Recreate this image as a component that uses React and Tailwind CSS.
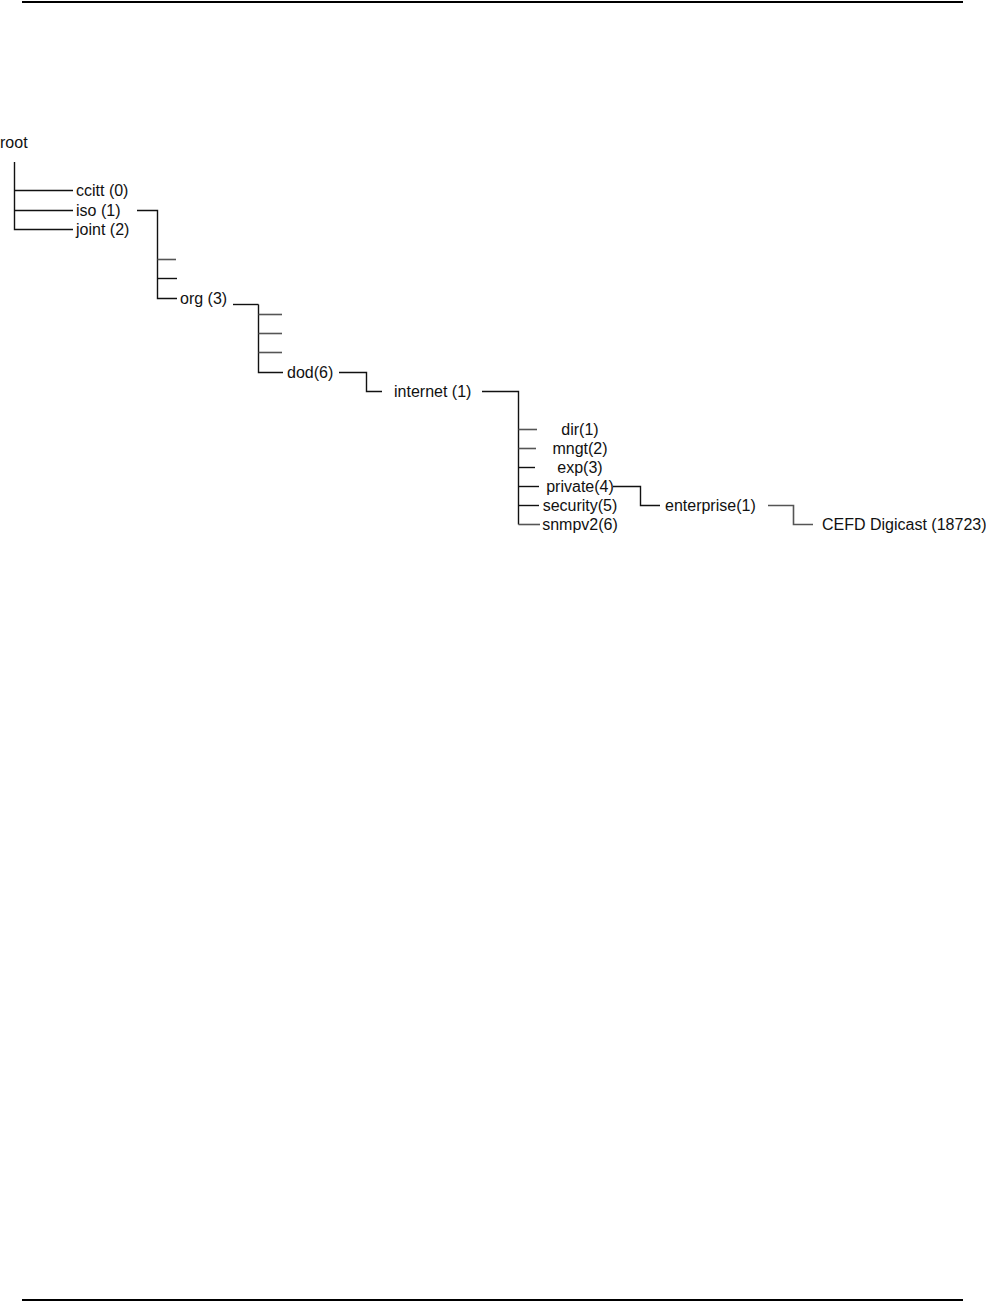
const labels = [
  { t: 'root', x: 0, y: 142 },
  { t: 'ccitt (0)', x: 76, y: 190 },
  { t: 'iso (1)', x: 76, y: 210 },
  { t: 'joint (2)', x: 76, y: 229 },
  { t: 'org (3)', x: 180, y: 298 },
  { t: 'dod(6)', x: 287, y: 372 },
  { t: 'internet (1)', x: 394, y: 391 },
  { t: 'dir(1)', x: 580, y: 429, center: true },
  { t: 'mngt(2)', x: 580, y: 448, center: true },
  { t: 'exp(3)', x: 580, y: 467, center: true },
  { t: 'private(4)', x: 580, y: 486, center: true },
  { t: 'security(5)', x: 580, y: 505, center: true },
  { t: 'snmpv2(6)', x: 580, y: 524, center: true },
  { t: 'enterprise(1)', x: 665, y: 505 },
  { t: 'CEFD Digicast (18723)', x: 822, y: 524 },
];

// connector paths, black and grey like the scanned original
const dark = [
  'M14.5 162V229.5H73',
  'M14.5 190.5H73',
  'M14.5 210.5H73',
  'M137 210.5H157.5V298.5H177',
  'M157.5 278.5H177',
  'M233 304.5H258.5',
  'M258.5 304.5V372.5H283',
  'M339 372.5H366.5V391.5H382',
  'M482 391.5H518.5V524.5',
  'M518.5 467.5H535',
  'M518.5 486.5H539',
  'M518.5 505.5H539',
  'M613 486.5H640.5V505.5H660',
];
const grey = [
  'M157.5 259.5H176',
  'M258.5 314.5H282',
  'M258.5 333.5H282',
  'M258.5 352.5H282',
  'M518.5 429.5H537',
  'M518.5 448.5H536',
  'M518.5 524.5H540',
  'M768 505.5H793.5V524.5H813',
];

function Label({ t, x, y, center }) {
  return (
    <div
      className={`absolute whitespace-nowrap text-[16px] leading-[18px] text-[#111] ${center ? '-translate-x-1/2' : ''}`}
      style={{ left: x, top: y - 8 }}
    >
      {t}
    </div>
  );
}

export default function App() {
  return (
    <div
      className="relative w-[986px] h-[1302px] bg-white overflow-hidden"
      style={{ fontFamily: '"Liberation Sans", Arial, sans-serif' }}
    >
      <div className="absolute left-[22px] right-[23px] top-[1px] h-[2px] bg-black" />

      <svg className="absolute inset-0" width="986" height="1302">
        {dark.map((d, i) => (
          <path key={'d' + i} d={d} fill="none" stroke="#111" strokeWidth="1.4" />
        ))}
        {grey.map((d, i) => (
          <path key={'g' + i} d={d} fill="none" stroke="#555" strokeWidth="1.6" />
        ))}
      </svg>

      {labels.map((l) => (
        <Label key={l.t} {...l} />
      ))}

      <div className="absolute left-[22px] right-[23px] top-[1299px] h-[2px] bg-black" />
    </div>
  );
}
